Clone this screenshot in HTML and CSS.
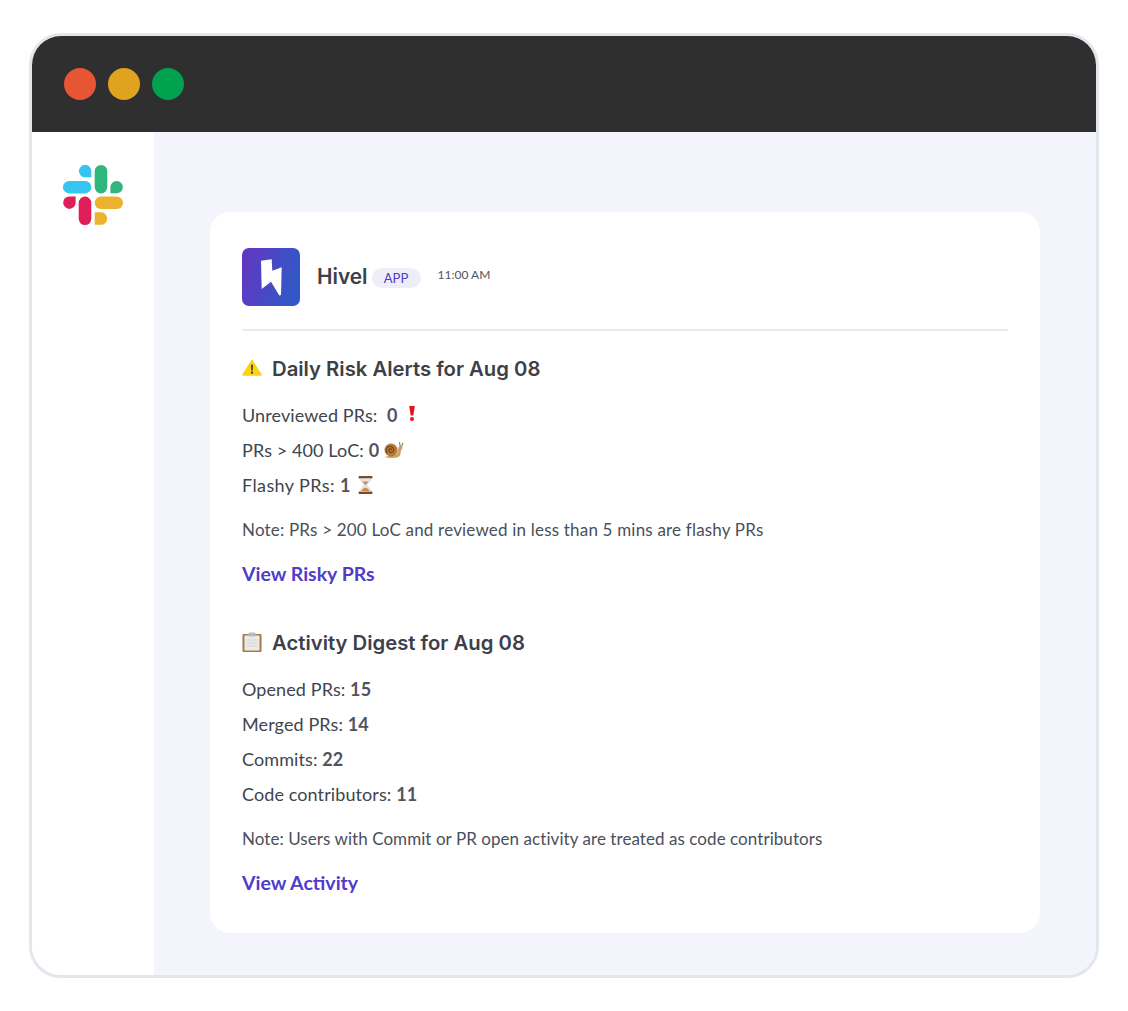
FILE: index.html
```html
<!DOCTYPE html>
<html lang="en">
  <head>
    <meta charset="UTF-8" />
    <meta name="viewport" content="width=device-width, initial-scale=1.0" />
    <title>Hivel Slack Alerts</title>
    <link rel="stylesheet" href="styles.css">
  </head>
  <body>
    <div class="window">
      <div class="titlebar">
        <span class="dot dot-red"></span>
        <span class="dot dot-yellow"></span>
        <span class="dot dot-green"></span>
      </div>
      <div class="window-body">
        <aside class="sidebar">
          <svg class="slack-logo" width="60" height="60" viewBox="0 0 60 60">
            <path fill="#36c5f0" d="M28.3 12.3V6.2A6.2 6.2 0 1 0 22 12.3z" />
            <rect fill="#36c5f0" x="0" y="16" width="28.3" height="12.4" rx="6.2" />
            <rect fill="#2eb67d" x="31.7" y="0" width="12.6" height="28.4" rx="6.3" />
            <path fill="#2eb67d" d="M47.4 28.3h6.2A6.2 6.2 0 1 0 47.4 22z" />
            <path fill="#e01e5a" d="M12.6 31.5v6.2A6.2 6.2 0 1 1 6.3 31.5z" />
            <rect fill="#e01e5a" x="15.7" y="31.6" width="12.6" height="28.4" rx="6.3" />
            <rect fill="#ecb22e" x="31.7" y="31.6" width="28.3" height="12.4" rx="6.2" />
            <path fill="#ecb22e" d="M31.7 47.2v12.6h6.2a6.3 6.3 0 1 0 0-12.6z" />
          </svg>
        </aside>
        <main class="content">
          <section class="card">
            <div class="msg-header">
              <svg class="app-logo" width="58" height="58" viewBox="0 0 58 58">
                <defs>
                  <linearGradient id="hivelGrad" x1="0" y1="0" x2="1" y2="0.3">
                    <stop offset="0" stop-color="#6535c2" />
                    <stop offset="1" stop-color="#3357c6" />
                  </linearGradient>
                </defs>
                <rect width="58" height="58" rx="7" fill="url(#hivelGrad)" />
                <path fill="#fff" d="M19 12.7L29.7 11.3L30.3 22.7L39.7 19.3L39 47L37.3 47.5L29 33.7L19.7 41z" />
              </svg>
              <span class="app-name">Hivel</span>
              <span class="app-badge">APP</span>
              <span class="msg-time">11:00 AM</span>
            </div>

            <div class="digest digest-risk">
              <h2 class="digest-title">
                <svg class="emoji-title" width="20" height="20" viewBox="0 0 20 20">
                  <path fill="#fcd116" stroke="#fcd116" stroke-width="1.6" stroke-linejoin="round" d="M10 2.5L19 17H1z" />
                  <path fill="#2f2f2f" d="M9.1 6.8h1.8l-.3 6h-1.2zM10 13.6a1.1 1.1 0 1 1 0 2.2 1.1 1.1 0 0 1 0-2.2z" />
                </svg>
                Daily Risk Alerts for Aug 08
              </h2>
              <p class="stat">Unreviewed PRs: &nbsp;<b>0</b>
                <svg class="emoji emoji-bang" width="8" height="16" viewBox="0 0 8 16">
                  <path fill="#e8101a" d="M1.2 1h5.600L5.300 10.600H2.700zM4 12a2 2 0 1 1 0 4 2 2 0 0 1 0-4z" />
                </svg>
              </p>
              <p class="stat">PRs &gt; 400 LoC: <b>0</b>
                <svg class="emoji" width="20" height="18" viewBox="0 0 20 18">
                  <path fill="#c9a36a" d="M0.500 16c3 1 10 1.200 12.500.6 2.800-.7 3.700-3 3.800-6.100.1-1.500 1.700-2.500 1.700-3.700 0-1-1-1.800-2-1.700-1.300.1-2 1-2.300 2.400-.4 1.800-.6 3.500-1.700 5.500z" />
                  <circle cx="7" cy="9" r="6.500" fill="#b57a35" />
                  <path fill="none" stroke="#6f4519" stroke-width="1.100" d="M7 9.200c.8-.8 0-1.800-1-1.500-1.500.4-1.500 2.800 0 3.500 2 .9 4-.8 3.700-2.900-.3-2.400-3-3.700-5.200-2.600-2.500 1.300-2.800 4.500-1.500 6.500" />
                  <path stroke="#6d5a45" stroke-width="0.900" d="M16.200 5.300L15.500 1.200M17.700 5.500L18.900 1.800" />
                </svg>
              </p>
              <p class="stat stat-flashy">Flashy PRs: <b>1</b>
                <svg class="emoji emoji-hourglass" width="15" height="18" viewBox="0 0 15 18">
                  <rect x="0.500" y="0" width="14" height="2.500" rx="1" fill="#7a4a2a" />
                  <rect x="0.500" y="15.500" width="14" height="2.500" rx="1" fill="#7a4a2a" />
                  <path fill="#e6e7ea" stroke="#b9bcc4" stroke-width="0.600" d="M2.500 2.500h10c0 3-3.500 5-4 6.500.5 1.500 4 3.500 4 6.500h-10c0-3 3.500-5 4-6.500-.5-1.500-4-3.500-4-6.500z" />
                  <path fill="#c98a4b" d="M4.500 5.500h6L7.500 9zM3.500 15.200c.5-2 3-3 4-3.600 1 .6 3.500 1.600 4 3.600z" />
                </svg>
              </p>
              <p class="note note-risk">Note: PRs &gt; 200 LoC and reviewed in less than 5 mins are flashy PRs</p>
              <a class="view-link" href="#">View Risky PRs</a>
            </div>

            <div class="digest digest-activity">
              <h2 class="digest-title">
                <svg class="emoji-title" width="20" height="20" viewBox="0 0 20 20">
                  <rect x="0.500" y="2" width="19" height="18" rx="1" fill="#a97a45" />
                  <rect x="2.500" y="3.500" width="15" height="15" fill="#ebebe9" />
                  <rect x="6.500" y="0.500" width="7" height="4" rx="1" fill="#b7bcc2" />
                  <path stroke="#d2d2d0" stroke-width="1" d="M5 8h10M5 11h10M5 14h10" />
                </svg>
                Activity Digest for Aug 08
              </h2>
              <p class="stat">Opened PRs: <b>15</b></p>
              <p class="stat">Merged PRs: <b>14</b></p>
              <p class="stat">Commits: <b>22</b></p>
              <p class="stat">Code contributors: <b>11</b></p>
              <p class="note">Note: Users with Commit or PR open activity are treated as code contributors</p>
              <a class="view-link" href="#">View Activity</a>
            </div>
          </section>
        </main>
      </div>
    </div>
  </body>
</html>
```

FILE: styles.css
```css
body {
  font-family: "Lato", "Liberation Sans", sans-serif;
  margin: 0;
  padding: 33px 29px 33px;
  background-color: white;
  color: #40454f;
}
.window {
  height: 945px;
  box-sizing: border-box;
  border: 3px solid #e4e6ee;
  border-radius: 32px;
  overflow: hidden;
  display: flex;
  flex-direction: column;
}
.titlebar {
  background-color: #2f2f2f;
  height: 96px;
  flex-shrink: 0;
  display: flex;
  align-items: center;
  gap: 12px;
  padding-left: 32px;
  padding-bottom: 1px;
  box-sizing: border-box;
}
.dot {
  width: 32px;
  height: 32px;
  border-radius: 50%;
}
.dot-red {
  background-color: #e65634;
}
.dot-yellow {
  background-color: #e0a31f;
}
.dot-green {
  background-color: #00a14f;
}
.window-body {
  flex: 1;
  display: flex;
}
.sidebar {
  width: 122px;
  flex-shrink: 0;
  background-color: white;
  padding: 33px 0 0 31px;
  box-sizing: border-box;
}
.slack-logo {
  display: block;
}
.content {
  flex: 1;
  background-color: #f3f4fc;
  padding: 80px 56px 0;
}
.card {
  background-color: white;
  border-radius: 20px;
  height: 721px;
  box-sizing: border-box;
  padding: 37px 32px 0;
}
.msg-header {
  display: flex;
  align-items: center;
  height: 82px;
  padding-bottom: 24px;
  box-sizing: border-box;
  border-bottom: 2px solid #e9eaee;
}
.app-logo {
  display: block;
  flex-shrink: 0;
}
.app-name {
  font-family: "Inter", sans-serif;
  font-weight: 600;
  font-size: 20.8px;
  color: #3d4049;
  margin-left: 17px;
  margin-top: -1px;
}
.app-badge {
  background-color: #eeeef9;
  color: #4f3cc9;
  font-size: 13px;
  line-height: 20px;
  width: 49px;
  text-align: center;
  border-radius: 10px;
  margin-left: 4px;
  margin-top: 1px;
}
.msg-time {
  font-size: 12px;
  color: #50555f;
  margin-left: 17px;
  margin-top: -6px;
}
.digest-risk {
  padding-top: 23px;
}
.digest-activity {
  padding-top: 41px;
}
.digest-title {
  display: flex;
  align-items: center;
  gap: 10px;
  font-family: "Inter", sans-serif;
  font-weight: 600;
  font-size: 20.3px;
  line-height: 30px;
  color: #3d4049;
  margin: 0 0 14px;
}
.emoji-title {
  flex-shrink: 0;
  margin-top: -3px;
}
.stat {
  font-size: 18px;
  letter-spacing: 0.1px;
  line-height: 35px;
  margin: 0;
}
.stat-flashy {
  letter-spacing: 0.4px;
}
.stat b {
  color: #4f5461;
  font-weight: 700;
}
.emoji {
  vertical-align: -2px;
}
.emoji-bang {
  margin-left: 6px;
  vertical-align: 1px;
}
.emoji-hourglass {
  margin-left: 2px;
}
.note {
  font-size: 17px;
  letter-spacing: 0.06px;
  line-height: 24px;
  color: #4a4f5b;
  margin: 15px 0 0;
}
.note-risk {
  letter-spacing: 0.19px;
}
.view-link {
  display: block;
  font-size: 19.5px;
  font-weight: 700;
  line-height: 26px;
  color: #4f3cc9;
  text-decoration: none;
  margin-top: 19px;
}
```
